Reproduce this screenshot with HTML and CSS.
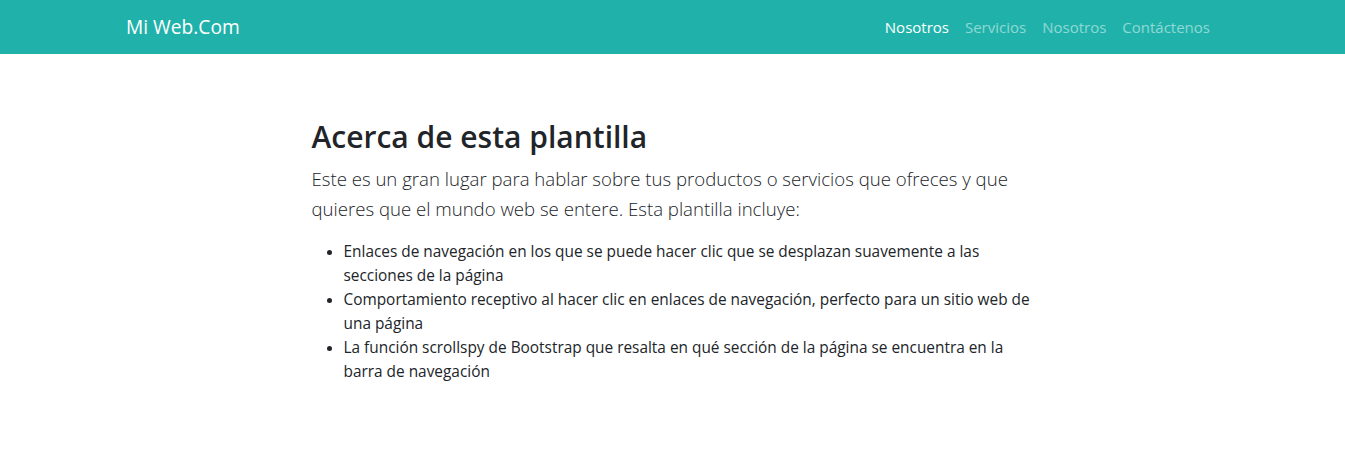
FILE: index.html
```html
<!DOCTYPE html>
<html lang="es">
<head>
<meta charset="utf-8">
<title>Mi Web.Com</title>
<link rel="stylesheet" href="styles.css">
</head>
<body>
<nav class="navbar">
  <div class="nav-inner">
    <a class="brand" href="#">Mi Web.Com</a>
    <ul class="nav-links">
      <li><a class="nav-link active" href="#about">Nosotros</a></li>
      <li><a class="nav-link" href="#services">Servicios</a></li>
      <li><a class="nav-link" href="#about">Nosotros</a></li>
      <li><a class="nav-link" href="#contact">Contáctenos</a></li>
    </ul>
  </div>
</nav>
<section class="about" id="about">
  <div class="content">
    <h2 class="title">Acerca de esta plantilla</h2>
    <p class="lead">Este es un gran lugar para hablar sobre tus productos o servicios que ofreces y que quieres que el mundo web se entere. Esta plantilla incluye:</p>
    <ul class="features">
      <li>Enlaces de navegación en los que se puede hacer clic que se desplazan suavemente a las secciones de la página</li>
      <li>Comportamiento receptivo al hacer clic en enlaces de navegación, perfecto para un sitio web de una página</li>
      <li>La función scrollspy de Bootstrap que resalta en qué sección de la página se encuentra en la barra de navegación</li>
    </ul>
  </div>
</section>
</body>
</html>
```

FILE: styles.css
```css
* { box-sizing: border-box; }

html, body {
  margin: 0;
  padding: 0;
  background: #fff;
}

body {
  font-family: "Segoe UI", "Open Sans", sans-serif;
  font-size: 15.4px;
  line-height: 24px;
  color: #212529;
}

.navbar {
  background: #20b2aa;
  height: 54px;
}

.nav-inner {
  max-width: 1093px;
  height: 100%;
  margin: 0 auto;
  display: flex;
  align-items: center;
  justify-content: space-between;
}

.brand {
  color: #fff;
  text-decoration: none;
  font-size: 19.2px;
  line-height: 30px;
}

.nav-links {
  list-style: none;
  margin: 0 1px 0 0;
  padding: 0;
  display: flex;
}

.nav-link {
  display: block;
  padding: 8px;
  color: rgba(255, 255, 255, 0.5);
  text-decoration: none;
  font-size: 15px;
  line-height: 24px;
}

.nav-link.active {
  color: #fff;
}

.about {
  padding-top: 64px;
}

.content {
  width: 730px;
  margin: 0 auto;
  padding-left: 4px;
}

.title {
  margin: 0 0 8px;
  font-size: 30px;
  font-weight: 600;
  line-height: 38px;
}

.lead {
  margin: 0 0 16px;
  font-size: 18.6px;
  font-weight: 300;
  line-height: 30px;
}

.features {
  margin: 0;
  padding-left: 32px;
}

.features li {
  line-height: 24px;
}
```
